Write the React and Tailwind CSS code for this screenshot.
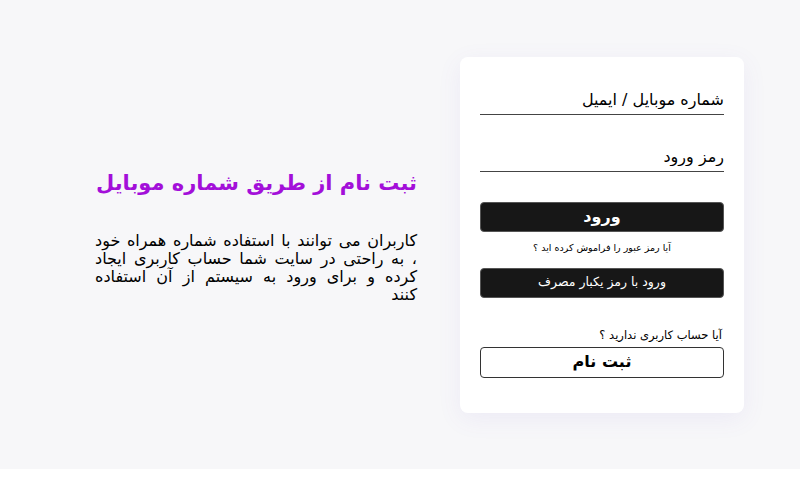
const lines = [
  'کاربران می توانند با استفاده شماره همراه خود',
  '، به راحتی در سایت شما حساب کاربری ایجاد',
  'کرده و برای ورود به سیستم از آن استفاده',
]

export default function App() {
  return (
    <div dir="rtl" className="w-full bg-white" style={{ fontFamily: '"DejaVu Sans", sans-serif' }}>
      <section className="flex h-[469px] items-center gap-[43px] bg-[#f7f7f9] pl-[95px] pr-[56px]">
        {/* login card */}
        <div className="flex w-[284px] shrink-0 flex-col rounded-lg bg-white px-5 pb-[35px] pt-[29px] shadow-[0_6px_24px_rgba(110,90,200,0.08)]">
          <input
            type="text"
            placeholder="شماره موبایل / ایمیل"
            className="h-[29px] w-full border-b border-[#444] bg-transparent text-[16px] text-black outline-none placeholder:text-black"
          />
          <input
            type="password"
            placeholder="رمز ورود"
            className="mt-[28px] h-[29px] w-full border-b border-[#444] bg-transparent text-[16px] text-black outline-none placeholder:text-black"
          />
          <button className="mt-[30px] h-[30px] w-full rounded-[4px] border border-[#555] bg-[#171717] text-[16px] font-bold leading-none text-white">
            ورود
          </button>
          <p className="mt-[8px] text-center text-[9.5px] leading-[15px] text-black">آیا رمز عبور را فراموش کرده اید ؟</p>
          <button className="mt-[13px] h-[30px] w-full rounded-[4px] border border-[#555] bg-[#171717] text-[12.5px] leading-none text-white">
            ورود با رمز یکبار مصرف
          </button>
          <p className="mt-[29px] pr-[2px] text-[11.5px] leading-[16px] text-black">آیا حساب کاربری ندارید ؟</p>
          <button className="mt-[4px] h-[31px] w-full rounded-[4px] border border-[#333] bg-white text-[16px] font-bold leading-none text-black">
            ثبت نام
          </button>
        </div>

        {/* intro text */}
        <div className="flex w-[322px] flex-col">
          <h1 className="whitespace-nowrap text-[21px] font-bold leading-[34px] text-[#a30fd9]">ثبت نام از طریق شماره موبایل</h1>
          <div className="mt-[32px] text-[16px] leading-[18px] text-black">
            {lines.map((l) => (
              <p key={l} className="text-justify [text-align-last:justify]">{l}</p>
            ))}
            <p>کنند</p>
          </div>
        </div>
      </section>
      <div className="h-[15px] bg-white" />
    </div>
  )
}
